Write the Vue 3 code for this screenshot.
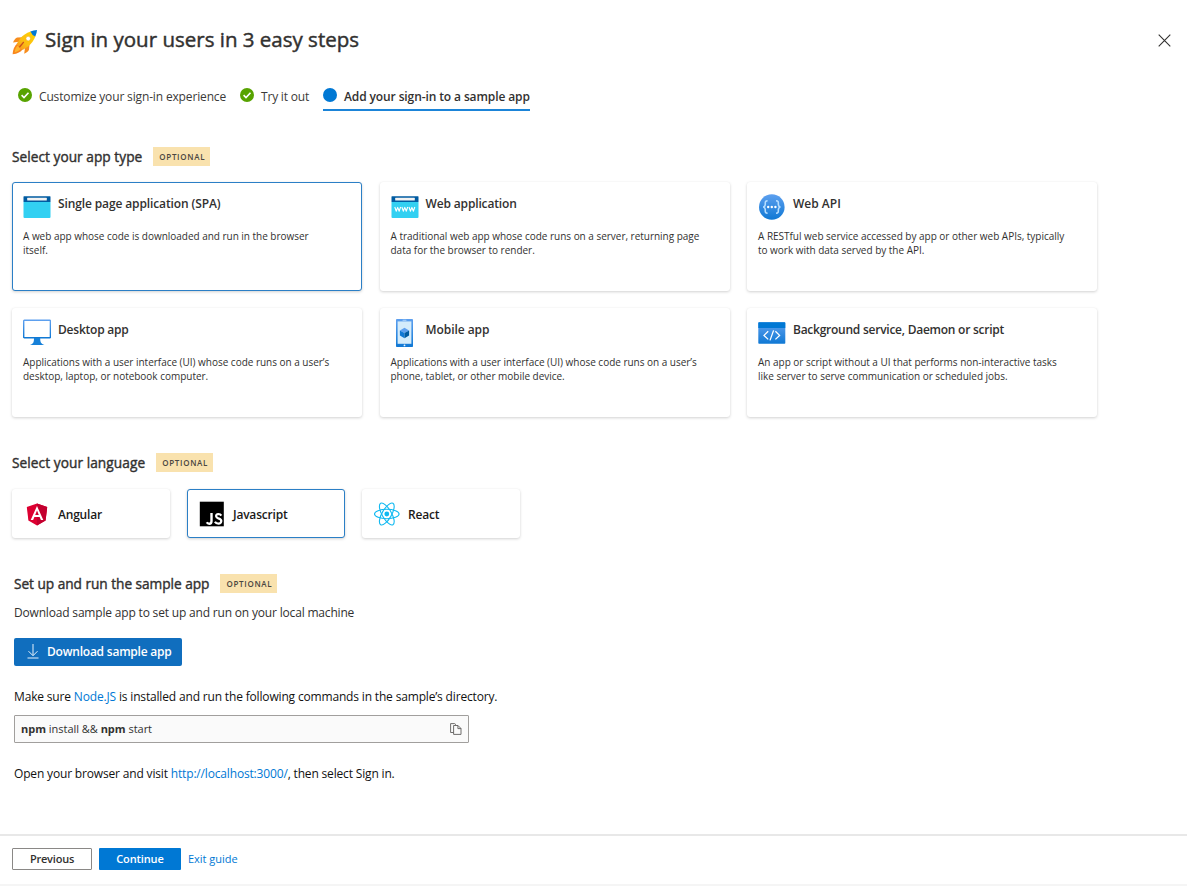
<script setup>
const steps = [
  { label: 'Customize your sign-in experience', done: true, cls: 's1' },
  { label: 'Try it out', done: true, cls: 's2' },
  { label: 'Add your sign-in to a sample app', done: false, cls: 's3' },
]
const appTypes = [
  { icon: 'spa', title: 'Single page application (SPA)', lines: ['A web app whose code is downloaded and run in the browser', 'itself.'], selected: true },
  { icon: 'web', title: 'Web application', lines: ['A traditional web app whose code runs on a server, returning page', 'data for the browser to render.'] },
  { icon: 'api', title: 'Web API', lines: ['A RESTful web service accessed by app or other web APIs, typically', 'to work with data served by the API.'] },
  { icon: 'desktop', title: 'Desktop app', lines: ['Applications with a user interface (UI) whose code runs on a user’s', 'desktop, laptop, or notebook computer.'] },
  { icon: 'mobile', title: 'Mobile app', lines: ['Applications with a user interface (UI) whose code runs on a user’s', 'phone, tablet, or other mobile device.'] },
  { icon: 'daemon', title: 'Background service, Daemon or script', lines: ['An app or script without a UI that performs non-interactive tasks', 'like server to serve communication or scheduled jobs.'] },
]
const languages = [
  { icon: 'angular', name: 'Angular' },
  { icon: 'js', name: 'Javascript', selected: true },
  { icon: 'react', name: 'React' },
]
</script>

<template>
  <div class="page">
    <header class="header">
      <svg class="rocket" width="26" height="26" viewBox="0 0 26 26">
        <defs>
          <linearGradient id="rk" x1="1" y1="0" x2="0" y2="1">
            <stop offset="0" stop-color="#ffd400" /><stop offset=".6" stop-color="#fbbd12" /><stop offset="1" stop-color="#f78d1e" />
          </linearGradient>
        </defs>
        <path d="M11 8.2 5.2 8.6Q3 9 1 13.6L7 12.8Z" fill="#f78d1e" />
        <path d="M17.6 14.8 17 20.6Q16.4 23 12.2 24.8L13 18.8Z" fill="#f78d1e" />
        <path d="M5.2 14.6 10.6 20.2Q8 24.4.6 25.2 1.2 18 5.2 14.6Z" fill="#f9861c" />
        <path d="M5.4 16.6 8.8 20Q6.4 22.6 2.6 23.4 3.2 19.4 5.4 16.6Z" fill="#ffb52e" />
        <path d="M18.6 2.4Q12 4.6 8.2 9.6L4.6 15 10.6 21 16 17.4Q21.2 13.4 23.4 7.2Z" fill="url(#rk)" />
        <path d="M18.4 2.5Q21.4 1.1 25 .9 24.7 4.6 23.3 7.4Q20 6.4 18.4 2.5Z" fill="#0078d4" />
        <circle cx="16.2" cy="9.6" r="2.3" fill="#fff" stroke="#f5a60a" stroke-width=".5" />
        <path d="M11.4 13.4 7.8 17.8" stroke="#c8501e" stroke-width="1.4" stroke-linecap="round" />
      </svg>
      <h1>Sign in your users in 3 easy steps</h1>
      <svg class="close" width="13" height="13" viewBox="0 0 13 13" fill="none" stroke="#323130" stroke-width="1.1">
        <path d="M.7.7 12.3 12.3M12.3.7.7 12.3" />
      </svg>
    </header>

    <nav class="steps">
      <div v-for="s in steps" :key="s.label" class="step" :class="[s.cls, { current: !s.done }]">
        <svg width="14" height="14" viewBox="0 0 14 14">
          <circle cx="7" cy="7" r="7" :fill="s.done ? '#57a300' : '#0078d4'" />
          <path v-if="s.done" d="M3.6 7.2 6 9.5 10.5 4.8" fill="none" stroke="#fff" stroke-width="1.6" />
        </svg>
        <span>{{ s.label }}</span>
      </div>
    </nav>

    <section class="types">
      <div class="heading"><h2 class="h-type">Select your app type</h2><span class="badge">OPTIONAL</span></div>
      <div class="grid">
        <article v-for="c in appTypes" :key="c.title" class="card" :class="{ selected: c.selected }">
          <div class="card-head">
            <svg class="card-icon" width="28" height="28" viewBox="0 0 28 28">
              <defs>
                <linearGradient id="blue" x1="0" y1="0" x2="0" y2="1">
                  <stop offset="0" stop-color="#5ea0ef" /><stop offset="1" stop-color="#0f78d4" />
                </linearGradient>
              </defs>
              <template v-if="c.icon === 'spa' || c.icon === 'web'">
                <path d="M.5 9h27v15a1 1 0 0 1-1 1h-25a1 1 0 0 1-1-1z" fill="#32d0f2" />
                <path d="M1 3.2h26a.5.5 0 0 1 .5.5V9H.5V3.7a.5.5 0 0 1 .5-.5z" fill="#005ba1" />
                <rect x="4.2" y="4.8" width="19.6" height="2.7" rx=".5" fill="#f2f2f2" />
                <path v-if="c.icon === 'web'" d="M3.8 14 5.2 18.2 6.7 14.4 8.2 18.2 9.6 14M10.9 14 12.3 18.2 13.8 14.4 15.3 18.2 16.7 14M18 14 19.4 18.2 20.9 14.4 22.4 18.2 23.8 14" fill="none" stroke="#fff" stroke-width="1.1" stroke-linejoin="round" />
              </template>
              <template v-else-if="c.icon === 'api'">
                <circle cx="13.8" cy="14" r="12.8" fill="url(#blue)" />
                <path d="M9.6 7.8C6.6 7.8 7.4 10 7.2 11.8Q7 13.6 5.2 14 7 14.4 7.2 16.2C7.4 18 6.6 20.2 9.6 20.2" fill="none" stroke="#b3dcff" stroke-width="1.6" />
                <path d="M18 7.8C21 7.8 20.2 10 20.4 11.8Q20.6 13.6 22.4 14 20.6 14.4 20.4 16.2C20.2 18 21 20.2 18 20.2" fill="none" stroke="#b3dcff" stroke-width="1.6" />
                <circle cx="10.2" cy="14" r="1.2" fill="#fff" /><circle cx="13.8" cy="14" r="1.2" fill="#fff" /><circle cx="17.4" cy="14" r="1.2" fill="#fff" />
              </template>
              <template v-else-if="c.icon === 'desktop'">
                <rect x=".7" y="1.2" width="26.7" height="17.6" rx=".6" fill="#fff" stroke="url(#blue)" stroke-width="1.4" />
                <path d="M11 19h6.2c0 4.500 .8 5.500 4.200 7H7c3.400-1.500 4-2.500 4-7z" fill="#1680d8" />
              </template>
              <template v-else-if="c.icon === 'mobile'">
                <rect x="5" y="0" width="17" height="28" rx=".8" fill="url(#blue)" />
                <rect x="6.600" y="2.400" width="13.8" height="22.4" fill="#d4ecfb" />
                <rect x="11.400" y=".8" width="4.2" height=".9" rx=".4" fill="#b5d8fa" />
                <circle cx="13.5" cy="26.400" r=".9" fill="#e8f5ff" />
                <path d="M13.500 8.8 18.100 11.4 13.500 14 8.900 11.4Z" fill="#5ea0ef" />
                <path d="M8.900 11.4 13.500 14V19.2L8.900 16.6Z" fill="#0f78d4" />
                <path d="M18.100 11.4 13.500 14V19.2L18.100 16.6Z" fill="#005ba1" />
              </template>
              <template v-else>
                <rect x=".3" y="3.2" width="27" height="21.6" rx=".7" fill="url(#blue)" />
                <path d="M1 3.2h25.6a.7.7 0 0 1 .7.7V9H.3V3.9a.7.7 0 0 1 .7-.7z" fill="#0078d4" />
                <path d="M10.2 12.2 6 16.4 10.2 20.4M17.4 12.2 21.6 16.4 17.4 20.4M15.6 11.4 12 21.4" fill="none" stroke="#fff" stroke-width="1.3" />
              </template>
            </svg>
            <h3 :class="'t-' + c.icon">{{ c.title }}</h3>
          </div>
          <p><span v-for="l in c.lines" :key="l">{{ l }}</span></p>
        </article>
      </div>
    </section>

    <section class="langs">
      <div class="heading"><h2 class="h-lang">Select your language</h2><span class="badge">OPTIONAL</span></div>
      <div class="lang-row">
        <div v-for="l in languages" :key="l.name" class="lang" :class="{ selected: l.selected }">
          <svg width="28" height="28" viewBox="0 0 28 28">
            <template v-if="l.icon === 'angular'">
              <path d="M14 3.5 24.2 7.1 22.6 20.6 14 25.5 5.4 20.6 3.8 7.1Z" fill="#dd0031" />
              <path d="M14 3.5 24.2 7.1 22.6 20.6 14 25.5Z" fill="#c3002f" />
              <path d="M14 6 7.7 20.1H10.1L11.4 16.9H16.6L17.9 20.1H20.3ZM14 10.6 15.8 14.9H12.2Z" fill="#fff" fill-rule="evenodd" />
            </template>
            <template v-else-if="l.icon === 'js'">
              <rect x="1.8" y="1.7" width="24" height="24.6" fill="#000" />
              <path d="M13.500 13V21Q13.500 23.700 11.300 23.700 9.600 23.700 8.800 22.200" fill="none" stroke="#fff" stroke-width="2.4" />
              <path d="M23.300 15.600Q22.300 14 20.400 14 18 14.200 18.100 16.100 18.200 17.500 20.400 18.400 23.500 19.500 23.300 21.200 23 23.700 20.500 23.700 18 23.600 16.900 21.700" fill="none" stroke="#fff" stroke-width="2.2" />
            </template>
            <g v-else fill="none" stroke="#10b9f1" stroke-width="1.1">
              <circle cx="13.8" cy="14" r="2.4" fill="#10b9f1" stroke="none" />
              <ellipse cx="13.8" cy="14" rx="12.3" ry="4.7" />
              <ellipse cx="13.8" cy="14" rx="12.3" ry="4.7" transform="rotate(60 13.8 14)" />
              <ellipse cx="13.8" cy="14" rx="12.3" ry="4.7" transform="rotate(120 13.8 14)" />
            </g>
          </svg>
          <span :class="'l-' + l.icon">{{ l.name }}</span>
        </div>
      </div>
    </section>

    <section class="setup">
      <div class="heading"><h2 class="h-setup">Set up and run the sample app</h2><span class="badge">OPTIONAL</span></div>
      <p class="sub">Download sample app to set up and run on your local machine</p>
      <button class="download">
        <svg width="13" height="15" viewBox="0 0 13 15" fill="none" stroke="#e6f1fb" stroke-width="1"><path d="M6 0V11.5M1.5 7.2 6 11.7 10.5 7.2M.5 14H11.5" /></svg>
        <span>Download sample app</span>
      </button>
      <p class="body make">Make sure <a>Node.JS</a> is installed and run the following commands in the sample’s directory.</p>
      <div class="code">
        <code><b>npm</b> install &amp;&amp; <b>npm</b> start</code>
        <svg width="12" height="12" viewBox="0 0 12 12" fill="none" stroke="#605e5c" stroke-width=".9"><path d="M3.5 9.5H.6V.6H4.7L6 1.8M3.6 2.5H8L11 5.5V11.4H3.6ZM7.9 2.6V5.6H11" /></svg>
      </div>
      <p class="body open">Open your browser and visit <a>http://localhost:3000/</a>, then select Sign in.</p>
    </section>

    <footer class="footer">
      <button class="btn prev"><span>Previous</span></button>
      <button class="btn next"><span>Continue</span></button>
      <a class="exit">Exit guide</a>
    </footer>
  </div>
</template>

<style>
html, body { background: #fff; }
</style>

<style scoped>
.page { box-sizing: border-box; width: 1187px; height: 886px; overflow: hidden; display: flex; flex-direction: column; border-bottom: 2px solid #f5f5f5; font-family: "Open Sans", "Noto Sans", sans-serif; color: #323130; white-space: nowrap; }
h1, h2, h3, p { margin: 0; font-weight: 400; }
svg { display: block; flex: none; }
button { font-family: inherit; margin: 0; }
a { color: #0078d4; text-decoration: none; }
.header { height: 78px; display: flex; align-items: center; padding: 0 16px 0 12px; flex: none; }
.rocket { margin: 6px 7px 0 0; }
h1 { font-size: 20.5px; line-height: 26px; margin-top: -1px; -webkit-text-stroke: .45px #323130; }
.close { margin: 2px 0 0 auto; }
.steps { display: flex; height: 33px; margin-left: 18px; flex: none; }
.step { display: flex; height: 31px; box-sizing: border-box; padding-top: 10px; margin-right: 14px; font-size: 12px; line-height: 18px; letter-spacing: -.15px; color: #3b3a39; }
.step svg { margin-right: 7px; }
.step.s2 { letter-spacing: -.2px; }
.step.current { height: 33px; border-bottom: 2px solid #1b84d8; font-weight: 600; letter-spacing: -.11px; color: #323130; margin-right: 0; }
.heading { display: flex; align-items: center; height: 20px; }
h2 { font-size: 13.7px; line-height: 20px; padding-top: 1px; -webkit-text-stroke: .4px #323130; }
.h-type { letter-spacing: .03px; }
.h-lang { letter-spacing: .06px; }
.h-setup { letter-spacing: -.04px; }
.badge { box-sizing: border-box; width: 57px; height: 19px; margin-left: 11px; padding-left: 1px; background: #f9e2ae; color: #4a4640; font-size: 8px; font-weight: 600; line-height: 19px; text-align: center; letter-spacing: .7px; }
.types { margin: 35px 0 0 12px; }
.grid { display: grid; grid-template-columns: repeat(3, 350px); grid-auto-rows: 109px; gap: 17px 17.5px; margin-top: 16px; }
.card, .lang { box-sizing: border-box; border-radius: 3px; border: 1px solid transparent; background: #fff; box-shadow: 0 1px 3px rgba(0, 0, 0, .18), 0 0 1px rgba(0, 0, 0, .06); }
.card { padding: 9px 10px; }
.card.selected, .lang.selected { border-color: #2b7fc6; }
.card-head { display: flex; height: 30px; }
.card-icon { margin: 1px 7px 0 0; }
h3 { font-size: 12px; line-height: 23px; font-weight: 600; letter-spacing: -.15px; }
.t-spa { letter-spacing: -.12px; }
.t-api { letter-spacing: 0; }
.t-desktop { letter-spacing: -.22px; }
.t-mobile { letter-spacing: -.06px; }
.t-daemon { letter-spacing: -.25px; }
.card p { margin-top: 7px; font-size: 10px; line-height: 14px; letter-spacing: -.02px; }
.card p span { display: block; }
.langs { margin: 35px 0 0 12px; }
.lang-row { display: flex; gap: 17px; margin-top: 17px; }
.lang { width: 158px; height: 49px; display: flex; align-items: center; padding-left: 10px; font-size: 12px; font-weight: 600; letter-spacing: -.2px; color: #1b1a19; }
.lang svg { margin-right: 7px; }
.lang span { padding-top: 2px; }
.setup { margin: 35.5px 0 0 14px; }
.setup h2 { padding-top: 0; }
.sub { margin-top: 10px; font-size: 12px; line-height: 18px; letter-spacing: -.18px; }
.download { display: flex; align-items: center; box-sizing: border-box; width: 168px; height: 28px; margin-top: 16px; padding: 0 0 0 13px; border: 0; border-radius: 2px; background: #106ebe; color: #fff; font-size: 12px; font-weight: 600; letter-spacing: -.22px; }
.download svg { margin-right: 7px; }
.body { font-size: 12px; line-height: 18px; letter-spacing: -.165px; color: #111; }
.make { margin-top: 22px; }
.code { box-sizing: border-box; width: 455px; height: 28px; margin-top: 9px; padding: 0 6px; border: 1px solid #a19f9d; border-radius: 1px; background: #fafafa; display: flex; align-items: center; justify-content: space-between; }
.code code { font-family: inherit; font-size: 11px; letter-spacing: -.02px; }
.open { margin-top: 22px; }
.footer { box-sizing: border-box; height: 50px; margin-top: auto; border-top: 2px solid #e8e8e8; display: flex; align-items: flex-start; padding: 12px 0 0 12px; flex: none; }
.btn { box-sizing: border-box; height: 22px; padding: 0; border-radius: 1px; font-size: 11px; font-weight: 600; line-height: 20px; letter-spacing: -.2px; }
.prev { width: 80px; border: 1px solid #8a8886; background: #fff; color: #323130; }
.next { width: 82px; margin-left: 7px; border: 0; background: #0078d4; color: #fff; letter-spacing: -.12px; }
.exit { margin-left: 7px; font-size: 11px; line-height: 22px; letter-spacing: -.03px; }
</style>
